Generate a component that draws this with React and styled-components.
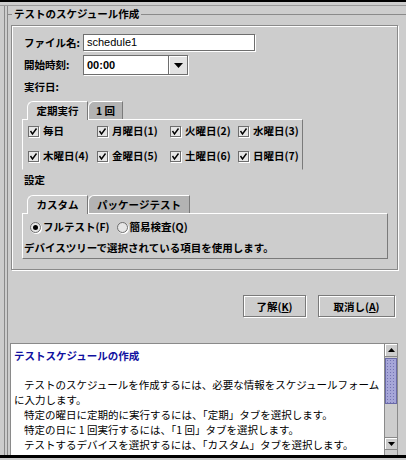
import styled, { createGlobalStyle } from "styled-components";

const GlobalStyle = createGlobalStyle`
  body {
    margin: 0;
    background: #cdcdcd;
    font-family: "Noto Sans CJK JP", "Noto Sans", sans-serif;
    color: #000;
  }
`;

const Window = styled.div`
  width: 406px;
  height: 458px;
  box-sizing: border-box;
  border-top: 2px solid #000;
  border-bottom: 3px solid #000;
  background: #cdcdcd;
  display: flex;
  flex-direction: column;
  overflow: hidden;
`;

const TopRule = styled.div`
  margin-top: 3px;
  border-top: 1px solid #9a9a9a;
`;

const Frame = styled.div`
  flex: 1;
  min-height: 0;
  display: flex;
  flex-direction: column;
  margin-left: 4px;
  border-left: 4px double #8a8a8a;
`;

const TitleRow = styled.div`
  display: flex;
  align-items: center;
  height: 16px;
  &::before {
    content: "";
    width: 4px;
    border-top: 1px solid #8a8a8a;
  }
  &::after {
    content: "";
    flex: 1;
    border-top: 1px solid #8a8a8a;
  }
`;

const Title = styled.span`
  font-size: 10.5px;
  font-weight: bold;
  line-height: 16px;
  padding: 0 2px;
  white-space: nowrap;
`;

const InnerPanel = styled.div`
  margin: 3px 8px 0 3px;
  border: 1px solid #8a8a8a;
  box-shadow: inset 1px 1px 0 #fff, 1px 1px 0 #fff;
  padding: 0 0 10px 10px;
`;

const FormGrid = styled.div`
  display: grid;
  grid-template-columns: 59px auto;
  row-gap: 4px;
  align-items: center;
  justify-items: start;
  margin-top: 8px;
  padding-left: 2px;
`;

const Label = styled.div`
  font-size: 10.5px;
  font-weight: bold;
  line-height: 14px;
  white-space: nowrap;
  margin-left: ${(p) => p.$indent || 0}px;
  margin-top: ${(p) => p.$top || 0}px;
`;

const TextField = styled.div`
  width: 172px;
  height: 17px;
  box-sizing: border-box;
  background: #fff;
  border: 1px solid #6e6e6e;
  box-shadow: 1px 1px 0 #fff;
  padding: 0 3px;
  font-family: "Liberation Sans", Arial, sans-serif;
  font-size: 11px;
  line-height: 15px;
`;

const Combo = styled.div`
  display: flex;
  height: 20px;
  box-shadow: 1px 1px 0 #fff;
`;

const ComboField = styled.div`
  width: 86px;
  box-sizing: border-box;
  background: #fff;
  border: 1px solid #6e6e6e;
  padding-left: 3px;
  font-family: "Liberation Sans", Arial, sans-serif;
  font-size: 11px;
  font-weight: bold;
  line-height: 18px;
`;

const ComboButton = styled.div`
  width: 19px;
  box-sizing: border-box;
  background: #e2e2e2;
  border: 1px solid #6e6e6e;
  border-left: none;
  box-shadow: inset 1px 1px 0 #fff;
  display: flex;
  align-items: center;
  justify-content: center;
`;

const TabGroup = styled.div`
  margin-top: ${(p) => p.$top}px;
`;

const TabStrip = styled.div`
  display: flex;
  align-items: flex-end;
  height: 18px;
  padding-left: 5px;
`;

const Tab = styled.div`
  position: relative;
  z-index: ${(p) => (p.$active ? 1 : 0)};
  width: ${(p) => p.$w}px;
  height: ${(p) => (p.$active ? 19 : 18)}px;
  margin-bottom: ${(p) => (p.$active ? -1 : 0)}px;
  box-sizing: border-box;
  background: ${(p) => (p.$active ? "#cdcdcd" : "#b3b3b3")};
  border-top: 1px solid #fff;
  border-left: 1px solid #fff;
  border-right: 1px solid #7a7a7a;
  border-top-left-radius: 6px;
  text-align: center;
  font-size: 10.5px;
  font-weight: bold;
  line-height: 17px;
  white-space: nowrap;
`;

const TabPanel = styled.div`
  width: ${(p) => p.$w}px;
  box-sizing: border-box;
  border-top: 1px solid #fff;
  border-left: 1px solid #fff;
  border-right: 1px solid #7a7a7a;
  border-bottom: 1px solid ${(p) => (p.$open ? "transparent" : "#7a7a7a")};
`;

const CheckGrid = styled.div`
  display: grid;
  grid-template-columns: 69px 73px 68px auto;
  row-gap: 11px;
  padding: 4px 0 6px 5px;
`;

const CheckItem = styled.label`
  display: flex;
  align-items: center;
  gap: 4px;
  font-size: 10.5px;
  font-weight: bold;
  line-height: 14px;
  white-space: nowrap;
`;

const Box = styled.span`
  width: 11px;
  height: 11px;
  box-sizing: border-box;
  border: 1px solid #6e6e6e;
  background: #e6e6e6;
  box-shadow: 1px 1px 0 #fff;
  display: flex;
`;

const RadioRow = styled.div`
  display: flex;
  align-items: center;
  gap: 7px;
  padding: 6px 0 0 7px;
`;

const RadioItem = styled.label`
  display: flex;
  align-items: center;
  gap: 2px;
  font-size: 10.5px;
  font-weight: bold;
  line-height: 14px;
  white-space: nowrap;
`;

const RadioDot = styled.span`
  width: 11px;
  height: 11px;
  box-sizing: border-box;
  border-radius: 50%;
  border: 1px solid #6e6e6e;
  background: #e6e6e6;
  box-shadow: 1px 1px 0 #fff;
  display: flex;
  align-items: center;
  justify-content: center;
  &::after {
    content: "";
    width: 5px;
    height: 5px;
    border-radius: 50%;
    background: ${(p) => (p.$on ? "#000" : "transparent")};
  }
`;

const PanelText = styled.div`
  margin: 7px 0 3px 1px;
  font-size: 10.5px;
  font-weight: bold;
  line-height: 14px;
  white-space: nowrap;
`;

const ButtonRow = styled.div`
  display: flex;
  justify-content: flex-end;
  gap: 12px;
  margin-top: 25px;
  padding-right: 11px;
`;

const Button = styled.button`
  width: ${(p) => p.$w}px;
  height: 22px;
  padding: 0;
  background: #cdcdcd;
  border: 1px solid #7a7a7a;
  box-shadow: inset 1px 1px 0 #fff, 1px 1px 0 #fff;
  font-family: "Noto Sans CJK JP", sans-serif;
  font-size: 10.5px;
  font-weight: bold;
  color: #000;
  u {
    text-decoration-thickness: 1px;
  }
`;

const HelpBox = styled.div`
  flex: 1;
  min-height: 0;
  display: flex;
  margin: 26px 8px 0 2px;
  border: 1px solid #8a8a8a;
  border-bottom: none;
`;

const HelpContent = styled.div`
  flex: 1;
  background: #fff;
  padding: 5px 0 0 3px;
  overflow: hidden;
`;

const HelpTitle = styled.div`
  color: #1010a0;
  font-size: 10.5px;
  font-weight: bold;
  line-height: 14px;
`;

const Para = styled.p`
  margin: ${(p) => (p.$first ? 14 : 0)}px 0 0;
  text-indent: 10px;
  font-size: 10.5px;
  line-height: 15px;
  white-space: nowrap;
`;

const Scrollbar = styled.div`
  width: 12px;
  display: flex;
  flex-direction: column;
  border-left: 1px solid #8a8a8a;
  background: #cdcdcd;
`;

const ScrollArrow = styled.div`
  height: 13px;
  box-sizing: border-box;
  border-top: ${(p) => (p.$down ? "1px solid #8a8a8a" : "none")};
  border-bottom: 1px solid #8a8a8a;
  box-shadow: inset 1px 1px 0 #fff;
  display: flex;
  align-items: center;
  justify-content: center;
  margin-bottom: ${(p) => (p.$down ? 5 : 0)}px;
`;

const Thumb = styled.div`
  height: 46px;
  margin-top: 1px;
  box-sizing: border-box;
  border: 1px solid #6a6aa8;
  background-color: #a6a6d8;
  background-image: radial-gradient(#7474b4 0.7px, transparent 0.8px);
  background-size: 3px 3px;
`;

const Track = styled.div`
  flex: 1;
`;

const Check = () => (
  <svg width="9" height="9" viewBox="0 0 9 9">
    <path d="M1.5 4 L3.5 7 L7.5 1.5" fill="none" stroke="#000" strokeWidth="1.4" />
  </svg>
);

const Arrow = ({ down, w = 9, h = 5 }) => (
  <svg width={w} height={h} viewBox="0 0 9 5">
    <path d={down ? "M0 0 H9 L4.5 5 Z" : "M0 5 H9 L4.5 0 Z"} fill="#000" />
  </svg>
);

const days = [
  "毎日",
  "月曜日(1)",
  "火曜日(2)",
  "水曜日(3)",
  "木曜日(4)",
  "金曜日(5)",
  "土曜日(6)",
  "日曜日(7)",
];

export default function App() {
  return (
    <>
      <GlobalStyle />
      <Window>
        <TopRule />
        <Frame>
          <TitleRow>
            <Title>テストのスケジュール作成</Title>
          </TitleRow>
          <InnerPanel>
            <FormGrid>
              <Label>ファイル名:</Label>
              <TextField>schedule1</TextField>
              <Label>開始時刻:</Label>
              <Combo>
                <ComboField>00:00</ComboField>
                <ComboButton>
                  <Arrow down />
                </ComboButton>
              </Combo>
              <Label $top={1}>実行日:</Label>
            </FormGrid>

            <TabGroup $top={7}>
              <TabStrip>
                <Tab $active $w={61}>定期実行</Tab>
                <Tab $w={35}>1 回</Tab>
              </TabStrip>
              <TabPanel $w={281} $open>
                <CheckGrid>
                  {days.map((d) => (
                    <CheckItem key={d}>
                      <Box>
                        <Check />
                      </Box>
                      {d}
                    </CheckItem>
                  ))}
                </CheckGrid>
              </TabPanel>
            </TabGroup>

            <Label $indent={2} $top={3}>設定</Label>

            <TabGroup $top={8}>
              <TabStrip>
                <Tab $active $w={61}>カスタム</Tab>
                <Tab $w={102}>パッケージテスト</Tab>
              </TabStrip>
              <TabPanel $w={366}>
                <RadioRow>
                  <RadioItem>
                    <RadioDot $on />
                    フルテスト(F)
                  </RadioItem>
                  <RadioItem>
                    <RadioDot />
                    簡易検査(Q)
                  </RadioItem>
                </RadioRow>
                <PanelText>デバイスツリーで選択されている項目を使用します。</PanelText>
              </TabPanel>
            </TabGroup>
          </InnerPanel>

          <ButtonRow>
            <Button $w={63}>
              了解(<u>K</u>)
            </Button>
            <Button $w={77}>
              取消し(<u>A</u>)
            </Button>
          </ButtonRow>

          <HelpBox>
            <HelpContent>
              <HelpTitle>テストスケジュールの作成</HelpTitle>
              <Para $first>
                テストのスケジュールを作成するには、必要な情報をスケジュールフォーム
              </Para>
              <Para style={{ textIndent: 0 }}>に入力します。</Para>
              <Para>特定の曜日に定期的に実行するには、「定期」タブを選択します。</Para>
              <Para>特定の日に 1 回実行するには、「1 回」タブを選択します。</Para>
              <Para>テストするデバイスを選択するには、「カスタム」タブを選択します。</Para>
            </HelpContent>
            <Scrollbar>
              <ScrollArrow>
                <Arrow w={7} h={4} />
              </ScrollArrow>
              <Thumb />
              <Track />
              <ScrollArrow $down>
                <Arrow down w={7} h={4} />
              </ScrollArrow>
            </Scrollbar>
          </HelpBox>
        </Frame>
      </Window>
    </>
  );
}
